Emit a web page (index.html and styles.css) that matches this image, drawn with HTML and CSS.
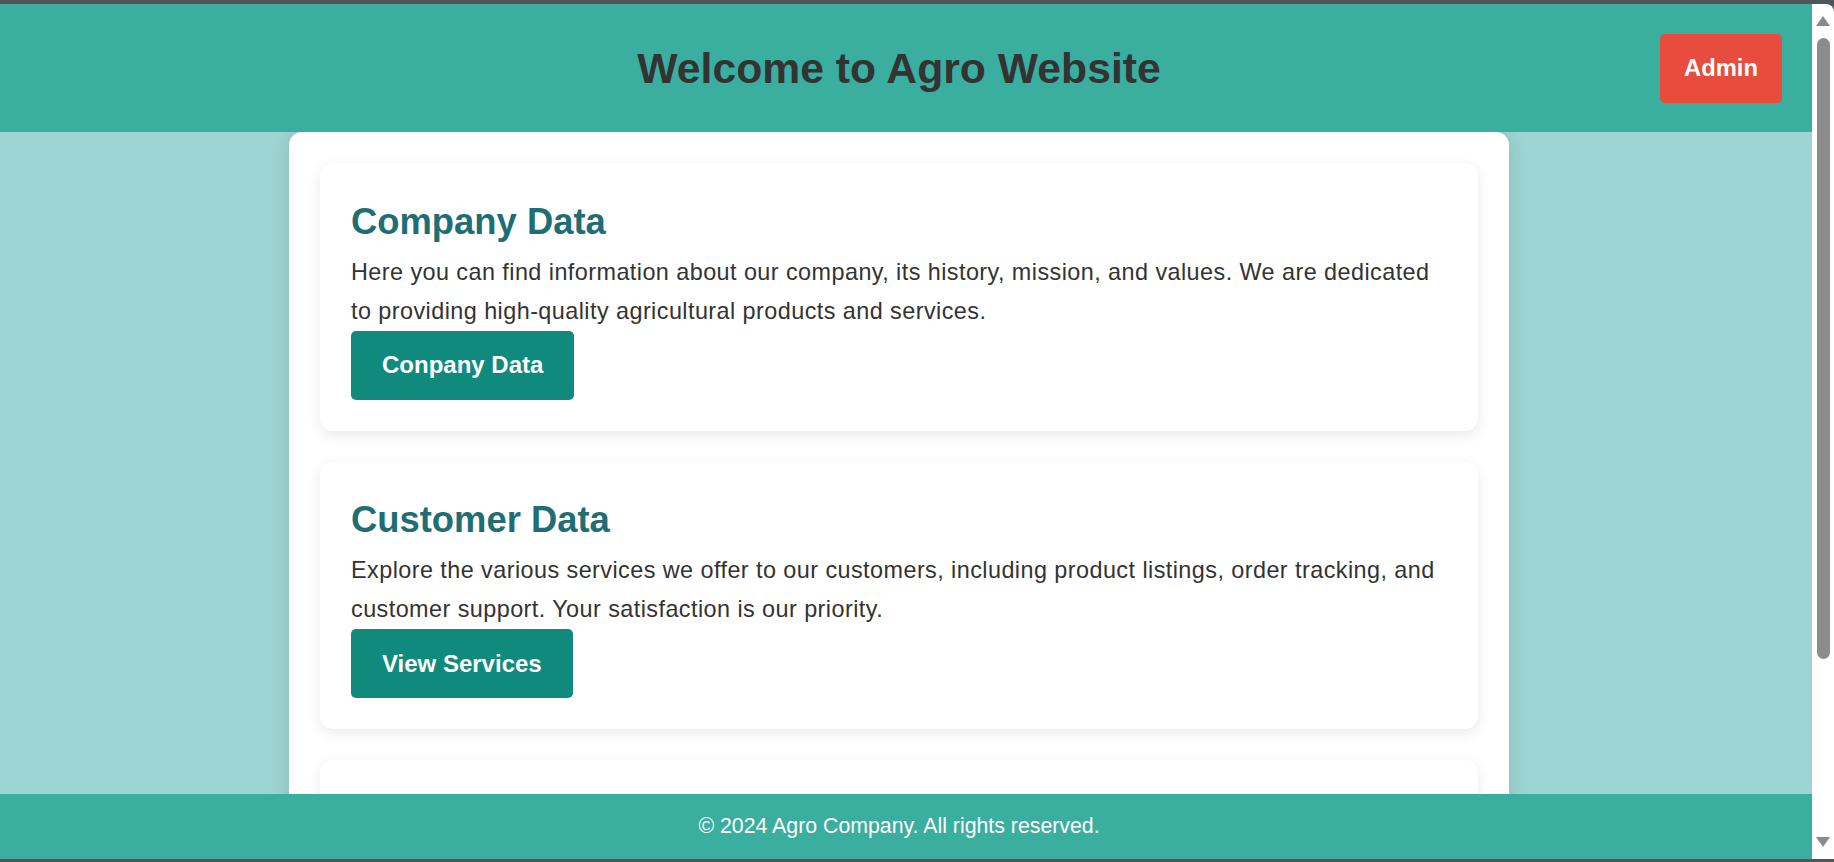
FILE: index.html
```html
<!DOCTYPE html>
<html lang="en">
<head>
<meta charset="utf-8">
<title>Agro Website</title>
<link rel="stylesheet" href="styles.css">
</head>
<body>
<div class="frame">
  <div class="window">
    <div class="viewport">
      <header class="header">
        <h1 class="title">Welcome to Agro Website</h1>
        <button class="admin">Admin</button>
      </header>
      <main class="main">
        <div class="container">
          <section class="card">
            <h2 class="card-title">Company Data</h2>
            <p class="card-text">Here you can find information about our company, its history, mission, and values. We are dedicated to providing high-quality agricultural products and services.</p>
            <button class="btn">Conpany Data</button>
          </section>
          <section class="card">
            <h2 class="card-title">Customer Data</h2>
            <p class="card-text">Explore the various services we offer to our customers, including product listings, order tracking, and customer support. Your satisfaction is our priority.</p>
            <button class="btn">View Services</button>
          </section>
          <section class="card card-empty"></section>
        </div>
      </main>
      <footer class="footer">&copy; 2024 Agro Company. All rights reserved.</footer>
    </div>
    <div class="scrollbar">
      <span class="arrow-up"></span>
      <span class="thumb"></span>
      <span class="spacer"></span>
      <span class="arrow-down"></span>
    </div>
  </div>
</div>
</body>
</html>
```

FILE: styles.css
```css
html, body {
  margin: 0;
  padding: 0;
  height: 862px;
  overflow: hidden;
  background: #515458;
  font-family: "Liberation Sans", Arial, sans-serif;
}

.frame {
  height: 862px;
  box-sizing: border-box;
  padding-top: 4px;
  padding-bottom: 3px;
  display: flex;
  flex-direction: column;
}

.window {
  flex: 1;
  min-height: 0;
  display: flex;
}

.viewport {
  flex: 1;
  min-width: 0;
  display: flex;
  flex-direction: column;
  background: #9ed4d3;
}

.header {
  height: 128px;
  flex-shrink: 0;
  box-sizing: border-box;
  padding-right: 14px;
  background: #3aae9f;
  display: grid;
  grid-template-columns: 1fr auto 1fr;
  align-items: center;
}

.title {
  grid-column: 2;
  margin: 0;
  font-size: 42.7px;
  font-weight: bold;
  color: #333333;
}

.admin {
  grid-column: 3;
  justify-self: end;
  margin-right: 16px;
  width: 122px;
  height: 69px;
  border: none;
  border-radius: 5px;
  background: #e74c3c;
  color: #ffffff;
  font-family: "Liberation Sans", Arial, sans-serif;
  font-size: 23.8px;
  font-weight: bold;
  padding: 0;
}

.main {
  flex: 1;
  min-height: 0;
  overflow: hidden;
  padding-right: 14px;
  display: flex;
  justify-content: center;
  align-items: flex-start;
}

.container {
  width: 1220px;
  box-sizing: border-box;
  padding: 31px;
  background: #ffffff;
  border-radius: 13px 13px 0 0;
  box-shadow: 0 0 20px rgba(0, 0, 0, 0.12);
  display: flex;
  flex-direction: column;
  gap: 31px;
}

.card {
  background: #ffffff;
  border-radius: 13px;
  padding: 31px;
  box-shadow: 0 4px 14px rgba(0, 0, 0, 0.09);
  display: flex;
  flex-direction: column;
  align-items: flex-start;
}

.card-empty {
  height: 200px;
}

.card-title {
  margin: 6.5px 0 10.4px;
  font-size: 36.4px;
  font-weight: bold;
  color: #206e74;
  line-height: 1.15;
}

.card-text {
  margin: 0;
  font-size: 23.4px;
  letter-spacing: 0.44px;
  line-height: 38.9px;
  color: #333333;
}

.btn {
  height: 69px;
  padding: 0 31px;
  border: none;
  border-radius: 5px;
  background: #118a7e;
  color: #ffffff;
  font-family: "Liberation Sans", Arial, sans-serif;
  font-size: 24px;
  font-weight: bold;
}

.footer {
  height: 65px;
  flex-shrink: 0;
  box-sizing: border-box;
  padding-right: 14px;
  background: #3aae9f;
  color: #ffffff;
  font-size: 21.3px;
  display: flex;
  align-items: center;
  justify-content: center;
}

.scrollbar {
  width: 22px;
  flex-shrink: 0;
  background: #ffffff;
  border-top-right-radius: 8px;
  box-sizing: border-box;
  padding: 12px 0 12px;
  display: flex;
  flex-direction: column;
  align-items: center;
}

.arrow-up {
  width: 0;
  height: 0;
  border-left: 7px solid transparent;
  border-right: 7px solid transparent;
  border-bottom: 10px solid #8a8a8a;
}

.thumb {
  margin-top: 12px;
  width: 13px;
  height: 621px;
  border-radius: 7px;
  background: #8c8c8c;
}

.spacer {
  flex: 1;
}

.arrow-down {
  width: 0;
  height: 0;
  border-left: 7px solid transparent;
  border-right: 7px solid transparent;
  border-top: 10px solid #8a8a8a;
}
```
